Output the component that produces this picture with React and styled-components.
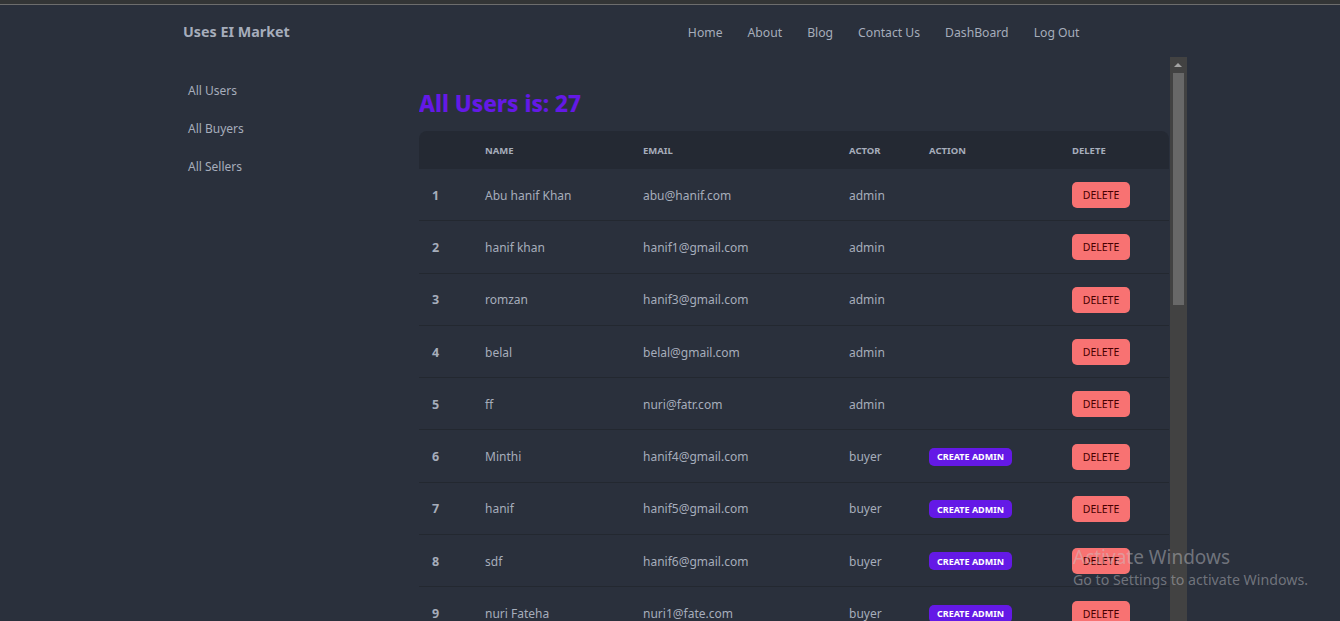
import React from "react";
import styled, { createGlobalStyle } from "styled-components";

const users = [
  ["Abu hanif Khan", "abu@hanif.com", "admin"],
  ["hanif khan", "hanif1@gmail.com", "admin"],
  ["romzan", "hanif3@gmail.com", "admin"],
  ["belal", "belal@gmail.com", "admin"],
  ["ff", "nuri@fatr.com", "admin"],
  ["Minthi", "hanif4@gmail.com", "buyer"],
  ["hanif", "hanif5@gmail.com", "buyer"],
  ["sdf", "hanif6@gmail.com", "buyer"],
  ["nuri Fateha", "nuri1@fate.com", "buyer"],
  ["rahim", "rahim@gmail.com", "buyer"],
  ["karim", "karim@gmail.com", "buyer"],
  ["salma", "salma@gmail.com", "seller"],
  ["jamal", "jamal@gmail.com", "seller"],
  ["kamal", "kamal@gmail.com", "seller"],
  ["rina", "rina@gmail.com", "buyer"],
  ["tina", "tina@gmail.com", "buyer"],
  ["mina", "mina@gmail.com", "seller"],
  ["sabbir", "sabbir@gmail.com", "buyer"],
  ["arif", "arif@gmail.com", "buyer"],
  ["nasir", "nasir@gmail.com", "seller"],
  ["rakib", "rakib@gmail.com", "buyer"],
  ["sakib", "sakib@gmail.com", "buyer"],
  ["tamim", "tamim@gmail.com", "seller"],
  ["mushfiq", "mushfiq@gmail.com", "buyer"],
  ["liton", "liton@gmail.com", "buyer"],
  ["sohan", "sohan@gmail.com", "seller"],
  ["hasan", "hasan@gmail.com", "buyer"],
];

const GlobalStyle = createGlobalStyle`
  html, body {
    margin: 0;
    padding: 0;
    height: 100%;
    overflow: hidden;
    background: #2a303c;
  }
  body {
    font-family: "Noto Sans", "Open Sans", sans-serif;
    color: #a6adbb;
  }
`;

const Page = styled.div`
  height: 621px;
  background: #2a303c;
  position: relative;
  overflow: hidden;
`;

const TopStrip = styled.div`
  height: 5px;
  background: #333536;
  border-bottom: 1px solid #6d6d6d;
  box-sizing: border-box;
`;

const Navbar = styled.nav`
  height: 52px;
  display: flex;
  align-items: center;
  padding-left: 183px;
  width: 1092px;
  box-sizing: border-box;
`;

const Brand = styled.div`
  font-size: 14.3px;
  font-weight: 700;
  color: #a6adbb;
  flex: 1;
`;

const NavLinks = styled.ul`
  display: flex;
  list-style: none;
  margin: 0;
  padding: 0;
  padding-top: 2px;
`;

const NavLink = styled.li`
  font-size: 12.2px;
  padding: 0 12.5px;
  color: #a6adbb;
`;

const Body = styled.div`
  display: flex;
  padding-left: 175px;
`;

const Sidebar = styled.ul`
  width: 244px;
  list-style: none;
  margin: 0;
  padding: 14px 0 0 13px;
  box-sizing: border-box;
`;

const SideItem = styled.li`
  height: 38px;
  display: flex;
  align-items: center;
  font-size: 12px;
  color: #a6adbb;
`;

const Main = styled.div`
  display: flex;
  height: 611px;
`;

const Content = styled.div`
  width: 751px;
  overflow: hidden;
`;

const ScrollTrack = styled.div`
  width: 17px;
  background: #424242;
  display: flex;
  flex-direction: column;
  align-items: center;
`;

const ScrollButton = styled.div`
  height: 16px;
  display: flex;
  align-items: center;
  justify-content: center;
`;

const ScrollThumb = styled.div`
  width: 11px;
  height: 232px;
  background: #686868;
`;

const Title = styled.h2`
  margin: 0;
  padding-top: 31px;
  height: 74px;
  box-sizing: border-box;
  font-size: 22.5px;
  font-weight: 800;
  color: #6419e6;
  line-height: 32px;
`;

const Table = styled.table`
  width: 750px;
  border-collapse: separate;
  border-spacing: 0;
  font-size: 12px;
`;

const Th = styled.th`
  background: #242933;
  height: 38px;
  text-align: left;
  font-size: 9.5px;
  font-weight: 700;
  text-transform: uppercase;
  padding: 0;
  width: ${(p) => (p.$w ? `${p.$w}px` : "auto")};
  color: #a6adbb;
  &:first-child {
    border-top-left-radius: 8px;
  }
  &:last-child {
    border-top-right-radius: 8px;
  }
`;

const Td = styled.td`
  height: 50.3px;
  padding: 1px 0 0;
  padding-left: ${(p) => p.$pl || 0}px;
  border-bottom: 1px solid #232830;
  font-weight: ${(p) => (p.$bold ? 700 : 400)};
  font-size: ${(p) => (p.$bold ? 12.5 : 12)}px;
  color: #a6adbb;
`;

const DeleteBtn = styled.button`
  background: #f87272;
  color: #470000;
  border: none;
  border-radius: 5px;
  height: 26px;
  width: 58px;
  font-family: inherit;
  font-size: 10.5px;
  padding: 0;
  cursor: pointer;
`;

const AdminBtn = styled.button`
  background: #6419e6;
  color: #ffffff;
  border: none;
  border-radius: 5px;
  height: 18px;
  width: 83px;
  font-family: inherit;
  font-size: 9px;
  font-weight: 700;
  padding: 0;
  cursor: pointer;
`;

const Watermark = styled.div`
  position: absolute;
  left: 1073px;
  top: 544px;
  color: rgba(200, 200, 205, 0.45);
  font-family: "Noto Sans", sans-serif;
  pointer-events: none;
`;

const WmTitle = styled.div`
  font-size: 19px;
  line-height: 26px;
`;

const WmSub = styled.div`
  font-size: 14.2px;
  line-height: 20px;
`;

export default function App() {
  return (
    <Page>
      <GlobalStyle />
      <TopStrip />
      <Navbar>
        <Brand>Uses EI Market</Brand>
        <NavLinks>
          {["Home", "About", "Blog", "Contact Us", "DashBoard", "Log Out"].map((l) => (
            <NavLink key={l}>{l}</NavLink>
          ))}
        </NavLinks>
      </Navbar>
      <Body>
        <Sidebar>
          <SideItem>All Users</SideItem>
          <SideItem>All Buyers</SideItem>
          <SideItem>All Sellers</SideItem>
        </Sidebar>
        <Main>
          <Content>
            <Title>All Users is: 27</Title>
            <Table>
              <thead>
                <tr>
                  <Th $w={66} />
                  <Th $w={158}>Name</Th>
                  <Th $w={206}>Email</Th>
                  <Th $w={80}>Actor</Th>
                  <Th $w={143}>Action</Th>
                  <Th>Delete</Th>
                </tr>
              </thead>
              <tbody>
                {users.map(([name, email, role], i) => (
                  <tr key={i}>
                    <Td $pl={13} $bold>
                      {i + 1}
                    </Td>
                    <Td>{name}</Td>
                    <Td>{email}</Td>
                    <Td>{role}</Td>
                    <Td>{role !== "admin" && <AdminBtn>CREATE ADMIN</AdminBtn>}</Td>
                    <Td>
                      <DeleteBtn>DELETE</DeleteBtn>
                    </Td>
                  </tr>
                ))}
              </tbody>
            </Table>
          </Content>
          <ScrollTrack>
            <ScrollButton>
              <svg width="9" height="6" viewBox="0 0 9 6">
                <polygon points="0,5 8,5 4,1" fill="#a3a3a3" />
              </svg>
            </ScrollButton>
            <ScrollThumb />
          </ScrollTrack>
        </Main>
      </Body>
      <Watermark>
        <WmTitle>Activate Windows</WmTitle>
        <WmSub>Go to Settings to activate Windows.</WmSub>
      </Watermark>
    </Page>
  );
}
